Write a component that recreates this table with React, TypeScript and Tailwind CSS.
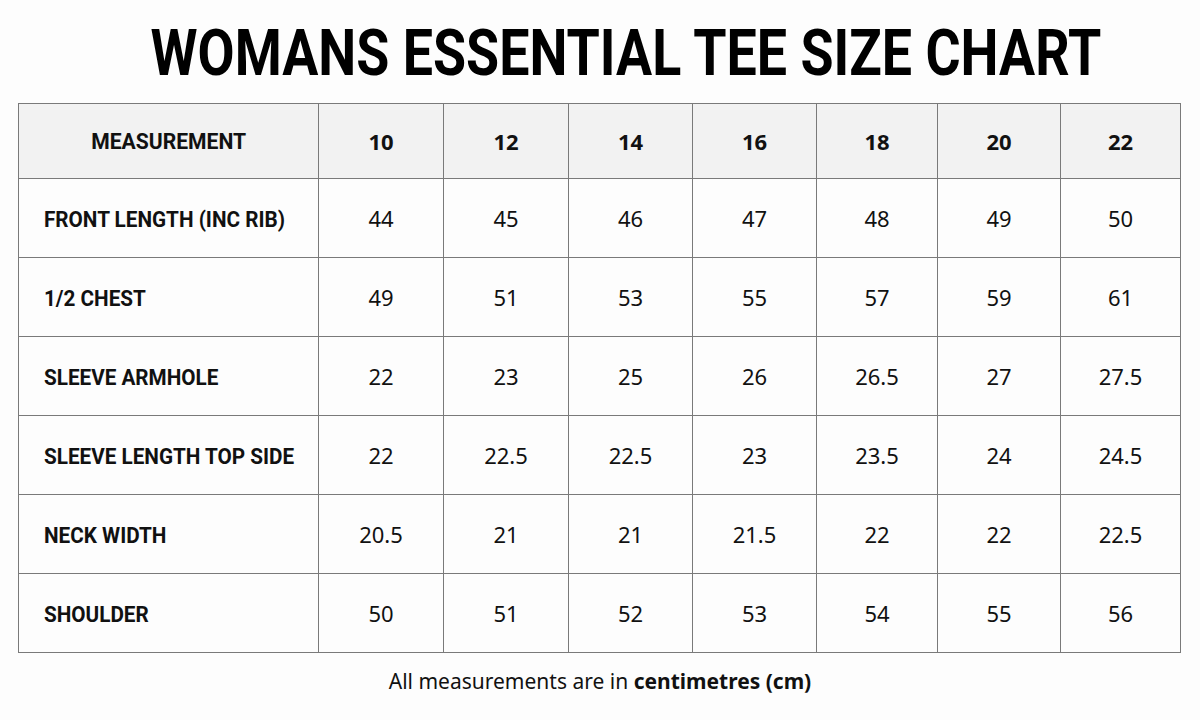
import React from "react";

const sizes = ["10", "12", "14", "16", "18", "20", "22"];

const rows: { label: string; values: string[] }[] = [
    { label: "FRONT LENGTH (INC RIB)", values: ["44", "45", "46", "47", "48", "49", "50"] },
    { label: "1/2 CHEST", values: ["49", "51", "53", "55", "57", "59", "61"] },
    { label: "SLEEVE ARMHOLE", values: ["22", "23", "25", "26", "26.5", "27", "27.5"] },
    { label: "SLEEVE LENGTH TOP SIDE", values: ["22", "22.5", "22.5", "23", "23.5", "24", "24.5"] },
    { label: "NECK WIDTH", values: ["20.5", "21", "21", "21.5", "22", "22", "22.5"] },
    { label: "SHOULDER", values: ["50", "51", "52", "53", "54", "55", "56"] },
];

const colWidths = ["w-[300px]", "w-[125px]", "w-[125px]", "w-[124px]", "w-[124px]", "w-[121px]", "w-[123px]", "w-[120px]"];

const App = () => {
    return (
        <div className="w-[1200px] h-[720px] bg-[#fdfdfd] text-[#111] font-['Noto_Sans',sans-serif]">
            <div className="h-[103px] pt-[23px] pl-[52px] flex justify-center">
                <h1 className="inline-block whitespace-nowrap scale-x-[0.84] font-['Roboto',sans-serif] font-bold text-[64px] leading-[62px] text-black">
                    WOMANS ESSENTIAL TEE SIZE CHART
                </h1>
            </div>

            <table className="ml-[18px] border-collapse table-fixed w-[1162px]">
                <colgroup>
                    {colWidths.map((w, i) => (
                        <col key={i} className={w} />
                    ))}
                </colgroup>
                <thead>
                    <tr className="h-[75px] bg-[#f2f2f2]">
                        <th className="border border-[#7a7a7a] text-center">
                            <span className="inline-block whitespace-nowrap scale-x-[0.96] font-['Roboto',sans-serif] font-bold text-[22px]">
                                MEASUREMENT
                            </span>
                        </th>
                        {sizes.map((s) => (
                            <th key={s} className="border border-[#7a7a7a] font-bold text-[22px] text-center">
                                {s}
                            </th>
                        ))}
                    </tr>
                </thead>
                <tbody>
                    {rows.map((r) => (
                        <tr key={r.label} className="h-[79px]">
                            <td className="border border-[#7a7a7a] pl-[25px] text-left">
                                <span className="inline-block whitespace-nowrap origin-left scale-x-[0.94] pt-[3px] font-['Roboto',sans-serif] font-bold text-[22px]">
                                    {r.label}
                                </span>
                            </td>
                            {r.values.map((v, i) => (
                                <td key={i} className="border border-[#7a7a7a] text-[22px] text-center">
                                    {v}
                                </td>
                            ))}
                        </tr>
                    ))}
                </tbody>
            </table>

            <p className="mt-[16px] text-center text-[21px] leading-[24px]">
                All measurements are in <span className="font-bold">centimetres (cm)</span>
            </p>
        </div>
    );
};

export default App;
